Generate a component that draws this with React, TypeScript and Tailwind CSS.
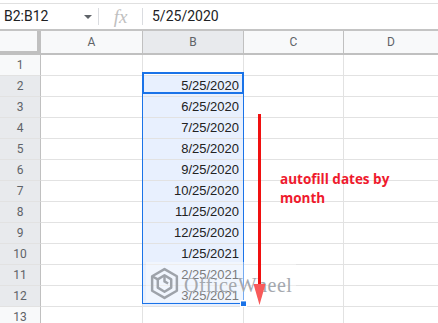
import React from 'react';

const dates = ['', '5/25/2020', '6/25/2020', '7/25/2020', '8/25/2020', '9/25/2020', '10/25/2020', '11/25/2020', '12/25/2020', '1/25/2021', '2/25/2021', '3/25/2021', ''];

export default function App() {
  return (
    <div className="relative w-[438px] h-[323px] overflow-hidden bg-white font-['Liberation_Sans',Arial,sans-serif]">
      {/* formula bar */}
      <div className="h-[28px] border-t border-[#e0e0e0] mt-[3px] border-b-2 border-b-[#c4c4c4] flex items-center text-[14px] text-[#202124] box-border">
        <div className="w-[98px] flex items-center pl-[4px] pr-[6px] h-full">
          <span className="font-['Roboto',sans-serif]">B2:B12</span>
          <span className="ml-auto w-0 h-0 border-l-[4px] border-r-[4px] border-t-[4px] border-l-transparent border-r-transparent border-t-[#5f6368]" />
        </div>
        <div className="w-px h-[17px] bg-[#dadce0]" />
        <div className="w-[43px] text-center text-[#c0c0c0] italic font-['Liberation_Serif',serif] text-[19px] leading-none">fx</div>
        <div className="w-px h-[17px] bg-[#dadce0]" />
        <span className="pl-[9px] font-['Roboto',sans-serif]">5/25/2020</span>
      </div>

      {/* grid */}
      <div className="grid grid-cols-[41px_102px_101px_100px_1fr] font-['Roboto',sans-serif]">
        <div className="h-[24px] bg-[#f8f9fa] border-r-4 border-b-4 border-[#c0c0c0]" />
        <div className="h-[24px] bg-[#f8f9fa] border-r border-b-2 border-[#c0c0c0] text-[12px] text-[#5f6368] flex items-center justify-center">A</div>
        <div className="h-[24px] bg-[#e8eaed] border-r border-b-2 border-[#c0c0c0] text-[12px] text-[#5f6368] flex items-center justify-center">B</div>
        <div className="h-[24px] bg-[#f8f9fa] border-r border-b-2 border-[#c0c0c0] text-[12px] text-[#5f6368] flex items-center justify-center">C</div>
        <div className="h-[24px] bg-[#f8f9fa] border-b-2 border-[#c0c0c0] text-[12px] text-[#5f6368] flex items-center justify-center">D</div>
        {dates.map((d, i) => {
          const sel = i >= 1 && i <= 11;
          return (
            <React.Fragment key={i}>
              <div className={`h-[21px] border-r border-r-[#c0c0c0] border-b border-b-[#e2e2e2] text-[12px] text-[#5f6368] flex items-center justify-center ${sel ? 'bg-[#e8eaed]' : 'bg-[#f8f9fa]'}`}>{i + 1}</div>
              <div className="h-[21px] border-r border-b border-[#e2e2e2]" />
              <div
                className={`h-[21px] border-b border-r border-[#e2e2e2] flex items-center justify-end pr-[4px] text-[13px] text-[#222] font-['Liberation_Sans',Arial,sans-serif] ${sel ? 'bg-[#e8f0fe]' : ''}`}
              >
                {d}
              </div>
              <div className="h-[21px] border-r border-b border-[#e2e2e2]" />
              <div className="h-[21px] border-b border-[#e2e2e2]" />
            </React.Fragment>
          );
        })}
      </div>

      {/* selection range */}
      <div className="absolute left-[142px] top-[72px] w-[102px] h-[232px] border border-[#1a73e8] pointer-events-none" />
      <div className="absolute left-[142px] top-[72px] w-[102px] h-[22px] border-2 border-[#1a73e8] pointer-events-none" />
      <div className="absolute left-[240px] top-[300px] w-[7px] h-[7px] bg-[#1a73e8] border border-white" />

      {/* watermark */}
      <div className="absolute left-[146px] top-[262px] w-[150px] h-[40px] bg-white/40 flex items-end gap-[4px] pl-[3px] pb-[2px]">
        <svg className="shrink-0" width="31" height="33" viewBox="0 0 30 32" fill="none" stroke="#9ea3aa" strokeWidth="2.4" strokeLinejoin="round">
          <path d="M15 2 L27 9 L27 23 L15 30 L3 23 L3 9 Z" />
          <path d="M15 8 L21.5 12 L21.5 20 L15 24 L8.5 20 L8.5 12 Z" />
          <path d="M15 8 L15 14 L18.5 16" />
          <path d="M3 9 L8.5 12" />
        </svg>
        <span className="shrink-0 mb-[4px] font-['Liberation_Serif',serif] text-[20px] leading-[22px] tracking-[0.5px] text-[#a4a8ae]">OfficeWheel</span>
      </div>

      {/* annotation arrow */}
      <svg className="absolute left-[250px] top-[112px]" width="20" height="196" viewBox="0 0 20 196">
        <rect x="8" y="2" width="3" height="176" fill="#f01010" />
        <path d="M3.5 172 L15.5 172 L9.5 193 Z" fill="#f85a5a" />
      </svg>
      <div className="absolute left-[280px] top-[170px] text-[13.5px] leading-[19px] font-bold text-[#ef1a2d] font-['Open_Sans',sans-serif]">
        autofill dates by
        <br />
        month
      </div>
    </div>
  );
}
